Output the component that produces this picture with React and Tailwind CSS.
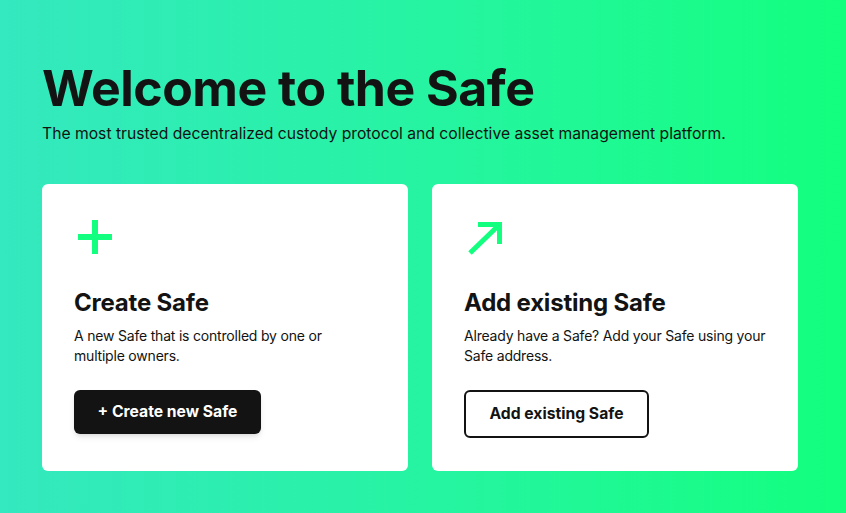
import React from 'react'

function PlusIcon() {
    return (
        <svg width="36" height="36" viewBox="0 0 36 36" className="block">
            <path d="M18 1v34M1 18h34" stroke="#12ff80" strokeWidth="6" fill="none" />
        </svg>
    )
}

function ArrowIcon() {
    return (
        <svg width="36" height="36" viewBox="0 0 36 36" className="block">
            <path d="M11 5.5h21.5V25M32.5 5.5L3 34" stroke="#12ff80" strokeWidth="5" fill="none" />
        </svg>
    )
}

function Card({ icon, title, lines, children }) {
    return (
        <div className="bg-white rounded-md px-8 pt-[35px] pb-[33px] flex flex-col">
            <div className="h-[36px] ml-[3px]">{icon}</div>
            <h2 className="mt-[33px] text-[24px] leading-[30px] font-bold text-[#121312] tracking-[-0.2px]">{title}</h2>
            <p className="mt-[8px] text-[14px] leading-[20px] text-[#121312] tracking-[-0.2px]">
                {lines.map((l) => (
                    <span key={l} className="block whitespace-nowrap">{l}</span>
                ))}
            </p>
            <div className="mt-[24px]">{children}</div>
        </div>
    )
}

export default function App() {
    return (
        <div className="w-[846px] h-[513px] overflow-hidden bg-gradient-to-r from-[#34e8bf] to-[#12ff7e] px-[42px] pt-[56px]"
            style={{ fontFamily: 'Inter, "Noto Sans", sans-serif' }}>
            <h1 className="text-[50px] leading-[64px] font-bold text-[#121312] tracking-[-0.5px]">Welcome to the Safe</h1>
            <p className="mt-[3px] text-[15.7px] leading-[22px] text-[#121312]">
                The most trusted decentralized custody protocol and collective asset management platform.
            </p>

            <div className="mt-[39px] grid grid-cols-2 gap-[24px] w-[756px]">
                <Card icon={<PlusIcon />} title="Create Safe" lines={['A new Safe that is controlled by one or', 'multiple owners.']}>
                    <button className="h-[44px] w-[187px] rounded-md bg-[#121312] text-white text-[15.7px] font-bold shadow-md">
                        + Create new Safe
                    </button>
                </Card>
                <Card icon={<ArrowIcon />} title="Add existing Safe" lines={['Already have a Safe? Add your Safe using your', 'Safe address.']}>
                    <button className="h-[48px] w-[185px] rounded-md border-2 border-[#121312] bg-white text-[#121312] text-[15.7px] font-bold">
                        Add existing Safe
                    </button>
                </Card>
            </div>
        </div>
    )
}
